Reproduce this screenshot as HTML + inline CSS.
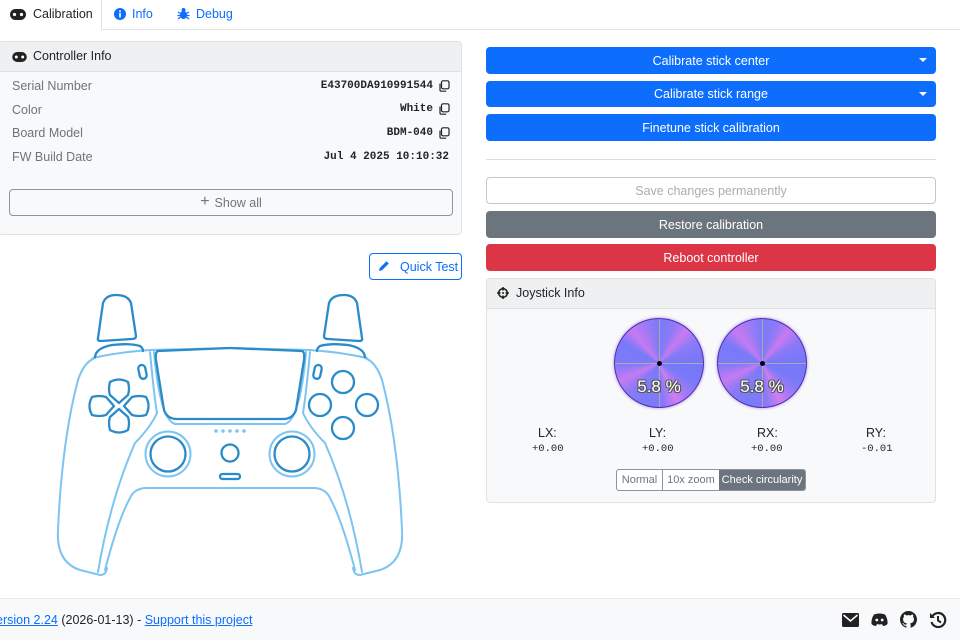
<!DOCTYPE html>
<html><head><meta charset="utf-8"><style>
*{box-sizing:border-box;margin:0;padding:0}
body{width:960px;height:640px;overflow:hidden;background:#fff;font-family:"Liberation Sans",sans-serif;font-size:12.5px;color:#212529;position:relative}
.a{position:absolute}
.mono{font-family:"Liberation Mono",monospace;font-size:11px;font-weight:bold}
.btn{position:absolute;left:486px;width:450px;border-radius:4px;color:#fff;text-align:center;font-size:12.5px;display:flex;align-items:center;justify-content:center}
.blue{background:#0d6efd}
.caret{position:absolute;right:9px;top:11px;width:0;height:0;border-left:4px solid transparent;border-right:4px solid transparent;border-top:4px solid #fff}
.lbl{color:#6c757d;font-size:12.5px}
.circ{position:absolute;width:90px;height:90px;border-radius:50%;border:1.5px solid #4b2fb0;
background:conic-gradient(from 0deg,#7a7af8 0deg,#8b7af8 20deg,#c87af0 40deg,#8a7af8 60deg,#7577f8 90deg,#7a7af8 120deg,#a67af5 140deg,#cf7ef0 155deg,#8479f8 175deg,#7a7af8 200deg,#8a7af7 225deg,#c57bf1 245deg,#7c7af8 270deg,#7a7af8 300deg,#c67af2 320deg,#a07af5 340deg,#7a7af8 360deg);box-shadow:0 0 3px #b080f0}
.circ:before{content:"";position:absolute;left:44px;top:0;width:1px;height:100%;background:#aaa}
.circ:after{content:"";position:absolute;top:44px;left:0;height:1px;width:100%;background:#aaa}
.dot{position:absolute;left:42px;top:42px;width:5px;height:5px;border-radius:50%;background:#001;z-index:2}
.pct{position:absolute;left:0;width:100%;top:58px;text-align:center;font-size:17px;color:#fff;z-index:2;text-shadow:-1px -1px 0 #555,1px -1px 0 #555,-1px 1px 0 #555,1px 1px 0 #555}
</style></head><body>

<!-- tabs -->
<div class="a" style="left:0;top:0;width:102px;height:30px;border-right:1px solid #dee2e6;background:#fff;z-index:2"></div>
<div class="a" style="left:101px;top:29px;width:859px;height:1px;background:#dee2e6"></div>
<svg class="a" style="left:10px;top:9px;z-index:3" width="16" height="11" viewBox="0 0 16 11"><rect x="0" y="0" width="16" height="11" rx="5.5" fill="#222"/><circle cx="4.5" cy="5.5" r="1.6" fill="#fff"/><circle cx="11.5" cy="5.5" r="1.6" fill="#fff"/></svg>
<div class="a" style="left:33px;top:7px;font-size:12.5px;z-index:3">Calibration</div>
<svg class="a" style="left:114px;top:8px" width="12" height="12"><circle cx="6" cy="6" r="6" fill="#0d6efd"/><rect x="5.2" y="5" width="1.6" height="4.5" fill="#fff"/><circle cx="6" cy="3.2" r="1" fill="#fff"/></svg>
<div class="a" style="left:132px;top:7px;font-size:12.5px;color:#0d6efd">Info</div>
<svg class="a" style="left:177px;top:7px" width="13" height="13" viewBox="0 0 13 13"><ellipse cx="6.5" cy="8" rx="3.5" ry="4" fill="#0d6efd"/><circle cx="6.5" cy="3" r="2" fill="#0d6efd"/><path d="M1 5l2.5 1.5M12 5l-2.5 1.5M0.5 8.5h3M12.5 8.5h-3M1 12l2.5-2M12 12l-2.5-2" stroke="#0d6efd" stroke-width="1.3"/></svg>
<div class="a" style="left:196px;top:7px;font-size:12.5px;color:#0d6efd">Debug</div>

<!-- controller info card -->
<div class="a" style="left:-2px;top:41px;width:464px;height:194px;border:1px solid #dfe1e3;border-radius:4px;background:#f8f9fa;overflow:hidden">
 <div style="height:30px;background:#eff0f1;border-bottom:1px solid #dfe1e3"></div>
</div>
<svg class="a" style="left:12px;top:52px" width="15" height="10" viewBox="0 0 16 11"><rect x="0" y="0" width="16" height="11" rx="5.5" fill="#222"/><circle cx="4.5" cy="5.5" r="1.6" fill="#fff"/><circle cx="11.5" cy="5.5" r="1.6" fill="#fff"/></svg>
<div class="a" style="left:33px;top:49px;font-size:12.5px">Controller Info</div>
<div class="a lbl" style="left:12px;top:79px">Serial Number</div>
<div class="a lbl" style="left:12px;top:103px">Color</div>
<div class="a lbl" style="left:12px;top:126px">Board Model</div>
<div class="a lbl" style="left:12px;top:150px">FW Build Date</div>
<div class="a mono" style="right:527px;top:80px">E43700DA910991544</div>
<div class="a mono" style="right:527px;top:103px">White</div>
<div class="a mono" style="right:527px;top:127px">BDM-040</div>
<div class="a mono" style="right:511px;top:151px">Jul 4 2025 10:10:32</div>
<svg class="a" style="left:438px;top:80px" width="12" height="12"><rect x="3.5" y="0.8" width="7.5" height="8" rx="1.5" fill="none" stroke="#222" stroke-width="1.2"/><path d="M2 3.5v6.5a1.2 1.2 0 0 0 1.2 1.2h5" fill="none" stroke="#222" stroke-width="1.2"/></svg>
<svg class="a" style="left:438px;top:103px" width="12" height="12"><rect x="3.5" y="0.8" width="7.5" height="8" rx="1.5" fill="none" stroke="#222" stroke-width="1.2"/><path d="M2 3.5v6.5a1.2 1.2 0 0 0 1.2 1.2h5" fill="none" stroke="#222" stroke-width="1.2"/></svg>
<svg class="a" style="left:438px;top:127px" width="12" height="12"><rect x="3.5" y="0.8" width="7.5" height="8" rx="1.5" fill="none" stroke="#222" stroke-width="1.2"/><path d="M2 3.5v6.5a1.2 1.2 0 0 0 1.2 1.2h5" fill="none" stroke="#222" stroke-width="1.2"/></svg>
<div class="a" style="left:9px;top:189px;width:444px;height:27px;border:1px solid #8e959b;border-radius:4px;display:flex;align-items:center;justify-content:center;color:#6c757d;font-size:12.5px"><span style="font-size:16px;margin-right:5px;margin-top:-2px">+</span>Show all</div>

<!-- quick test -->
<div class="a" style="left:369px;top:253px;width:93px;height:27px;border:1px solid #0d6efd;border-radius:4px;color:#0d6efd;font-size:12.5px;display:flex;align-items:center;padding-left:30px">Quick Test</div>
<svg class="a" style="left:378px;top:260px" width="12" height="12" viewBox="0 0 12 12"><path d="M1 11l.7-3L8.5 1.2l2.3 2.3L4 10.3z" fill="#0d6efd"/></svg>

<!-- controller -->
<svg class="a" style="left:0;top:280px" width="470" height="310" viewBox="0 280 470 310" fill="none" stroke-linejoin="round" stroke-linecap="round">
<defs>
<g id="half">
 <g stroke="#7cc4f2" stroke-width="2">
  <path d="M95 358 Q84 362 78 380 Q62 440 58 530 Q56 562 80 570 L100 575 Q106 575 107 568"/>
  <path d="M93 358 Q120 352 150 350 L230 348"/>
  <path d="M150 352 Q154 395 157 413 Q150 428 135 443 Q110 500 98 572"/>
  <path d="M105 570 Q118 520 130 498 Q134 489 145 488 L230 488"/>
  <path d="M154 352 Q160 420 175 424 L230 424"/>
  <circle cx="168" cy="454" r="22.5"/>
 </g>
 <g stroke="#2a8bc8" stroke-width="2.3">
  <path d="M98 338 L103 303 Q106 295 116 295 Q128 295 131 303 L136 336 Q136 339 132 339 L101 341 Q97 341 98 338Z"/>
  <path d="M95 357 Q96 348 112 345 Q130 343 140 346 Q143 348 143 351"/>
  <path d="M158 351 L230 348 M158 351 Q155 352 156 360 L164 410 Q167 419 177 419 L230 419"/>
  <rect x="139" y="365" width="7" height="14" rx="3.5" transform="rotate(-12 142 372)"/>
  <circle cx="168" cy="454" r="17.5"/>
 </g>
</g>
</defs>
<use href="#half"/>
<use href="#half" transform="translate(460 0) scale(-1 1)"/>
<g stroke="#2a8bc8" stroke-width="2.3">
  <path d="M110 382 Q119 377 128 382 Q130 389 128 395 L119 403 L110 395 Q108 389 110 382Z"/>
  <path d="M110 430 Q119 435 128 430 Q130 423 128 417 L119 409 L110 417 Q108 423 110 430Z"/>
  <path d="M92 397 Q87 406 92 415 Q99 417 106 415 L114 406 L106 397 Q99 395 92 397Z"/>
  <path d="M146 397 Q151 406 146 415 Q139 417 132 415 L124 406 L132 397 Q139 395 146 397Z"/>
<circle cx="230" cy="453" r="8.5"/>
<rect x="220" y="474" width="20" height="5" rx="2.5"/>
<circle cx="343" cy="382" r="11"/><circle cx="320" cy="405" r="11"/><circle cx="367" cy="405" r="11"/><circle cx="343" cy="428" r="11"/>
</g>
<g fill="#7cc4f2"><circle cx="216" cy="431" r="1.8"/><circle cx="223" cy="431" r="1.8"/><circle cx="230" cy="431" r="1.8"/><circle cx="237" cy="431" r="1.8"/><circle cx="244" cy="431" r="1.8"/></g>
</svg>

<!-- right buttons -->
<div class="btn blue" style="top:47px;height:27px">Calibrate stick center<span class="caret"></span></div>
<div class="btn blue" style="top:81px;height:26px">Calibrate stick range<span class="caret"></span></div>
<div class="btn blue" style="top:114px;height:27px">Finetune stick calibration</div>
<div class="a" style="left:486px;top:159px;width:450px;height:1px;background:#dcdfe2"></div>
<div class="btn" style="top:177px;height:27px;border:1px solid #c4c8cc;color:#a9adb1;background:#fff">Save changes permanently</div>
<div class="btn" style="top:211px;height:27px;background:#6c757d">Restore calibration</div>
<div class="btn" style="top:244px;height:27px;background:#dc3545">Reboot controller</div>

<!-- joystick card -->
<div class="a" style="left:486px;top:278px;width:450px;height:225px;border:1px solid #dfe1e3;border-radius:4px;background:#f8f9fa;overflow:hidden">
 <div style="height:30px;background:#eff0f1;border-bottom:1px solid #dfe1e3"></div>
</div>
<svg class="a" style="left:497px;top:287px" width="12" height="12" viewBox="0 0 12 12"><circle cx="6" cy="6" r="4.3" fill="none" stroke="#222" stroke-width="1.6"/><path d="M6 0v3.5M6 8.5V12M0 6h3.5M8.5 6H12" stroke="#222" stroke-width="1.6"/><circle cx="6" cy="6" r="1" fill="#222"/></svg>
<div class="a" style="left:516px;top:286px;font-size:12.5px">Joystick Info</div>
<div class="circ" style="left:614px;top:318px"><div class="dot"></div><div class="pct">5.8 %</div></div>
<div class="circ" style="left:717px;top:318px"><div class="dot"></div><div class="pct">5.8 %</div></div>
<div class="a" style="left:538px;top:426px">LX:</div>
<div class="a" style="left:649px;top:426px">LY:</div>
<div class="a" style="left:757px;top:426px">RX:</div>
<div class="a" style="left:866px;top:426px">RY:</div>
<div class="a mono" style="left:532px;top:443px;font-weight:normal;font-size:10.5px">+0.00</div>
<div class="a mono" style="left:642px;top:443px;font-weight:normal;font-size:10.5px">+0.00</div>
<div class="a mono" style="left:751px;top:443px;font-weight:normal;font-size:10.5px">+0.00</div>
<div class="a mono" style="left:861px;top:443px;font-weight:normal;font-size:10.5px">-0.01</div>
<div class="a" style="left:616px;top:469px;height:22px;display:flex;font-size:11px;border:1px solid #8e959b;border-radius:3px;overflow:hidden;background:#fff">
 <div style="width:46px;display:flex;align-items:center;justify-content:center;color:#6c757d;border-right:1px solid #8e959b">Normal</div>
 <div style="width:56px;display:flex;align-items:center;justify-content:center;color:#6c757d">10x zoom</div>
 <div style="width:86px;display:flex;align-items:center;justify-content:center;color:#fff;background:#6c757d">Check circularity</div>
</div>

<!-- footer -->
<div class="a" style="left:0;top:598px;width:960px;height:42px;background:#f8f9fa;border-top:1px solid #e6e8ea"></div>
<div class="a" style="left:0;top:613px;font-size:12.5px;color:#212529"><span style="color:#0d6efd;text-decoration:underline;margin-left:-4px">ersion 2.24</span> (2026-01-13) - <span style="color:#0d6efd;text-decoration:underline">Support this project</span></div>
<svg class="a" style="left:842px;top:613px" width="17" height="14" viewBox="0 0 17 14"><rect x="0" y="0" width="17" height="14" rx="1.5" fill="#222"/><path d="M1.5 2l7 6 7-6" fill="none" stroke="#fff" stroke-width="1.6"/></svg>
<svg class="a" style="left:871px;top:613px" width="17" height="14" viewBox="0 0 17 14"><path d="M3 1.5Q8.5-.5 14 1.5Q17 6 16.5 11Q14.5 13 12 13L11 11Q8.5 12 6 11L5 13Q2.5 13 .5 11Q0 6 3 1.5Z" fill="#222"/><circle cx="5.8" cy="7" r="1.4" fill="#fff"/><circle cx="11.2" cy="7" r="1.4" fill="#fff"/></svg>
<svg class="a" style="left:900px;top:611px" width="17" height="17" viewBox="0 0 16 16"><path fill="#222" d="M8 0C3.58 0 0 3.58 0 8c0 3.54 2.29 6.53 5.47 7.59.4.07.55-.17.55-.38v-1.33c-2.23.48-2.7-1.07-2.7-1.07-.36-.92-.89-1.17-.89-1.17-.73-.5.06-.49.06-.49.8.06 1.23.83 1.23.83.72 1.22 1.87.87 2.33.67.07-.52.28-.87.5-1.07-1.78-.2-3.64-.89-3.64-3.95 0-.87.31-1.59.82-2.15-.08-.2-.36-1.02.08-2.12 0 0 .67-.21 2.2.82a7.6 7.6 0 0 1 4 0c1.53-1.04 2.2-.82 2.2-.82.44 1.1.16 1.92.08 2.12.51.56.82 1.27.82 2.15 0 3.07-1.87 3.75-3.65 3.95.29.25.54.73.54 1.48v2.2c0 .21.15.46.55.38A8 8 0 0 0 16 8c0-4.42-3.58-8-8-8z"/></svg>
<svg class="a" style="left:929px;top:611px" width="18" height="18" viewBox="0 0 18 18"><path d="M3.5 5A7 7 0 1 1 2.5 11" fill="none" stroke="#222" stroke-width="2.2"/><path d="M1 2v5h5z" fill="#222"/><path d="M9 5v4.5l3 2" fill="none" stroke="#222" stroke-width="2"/></svg>
</body></html>
